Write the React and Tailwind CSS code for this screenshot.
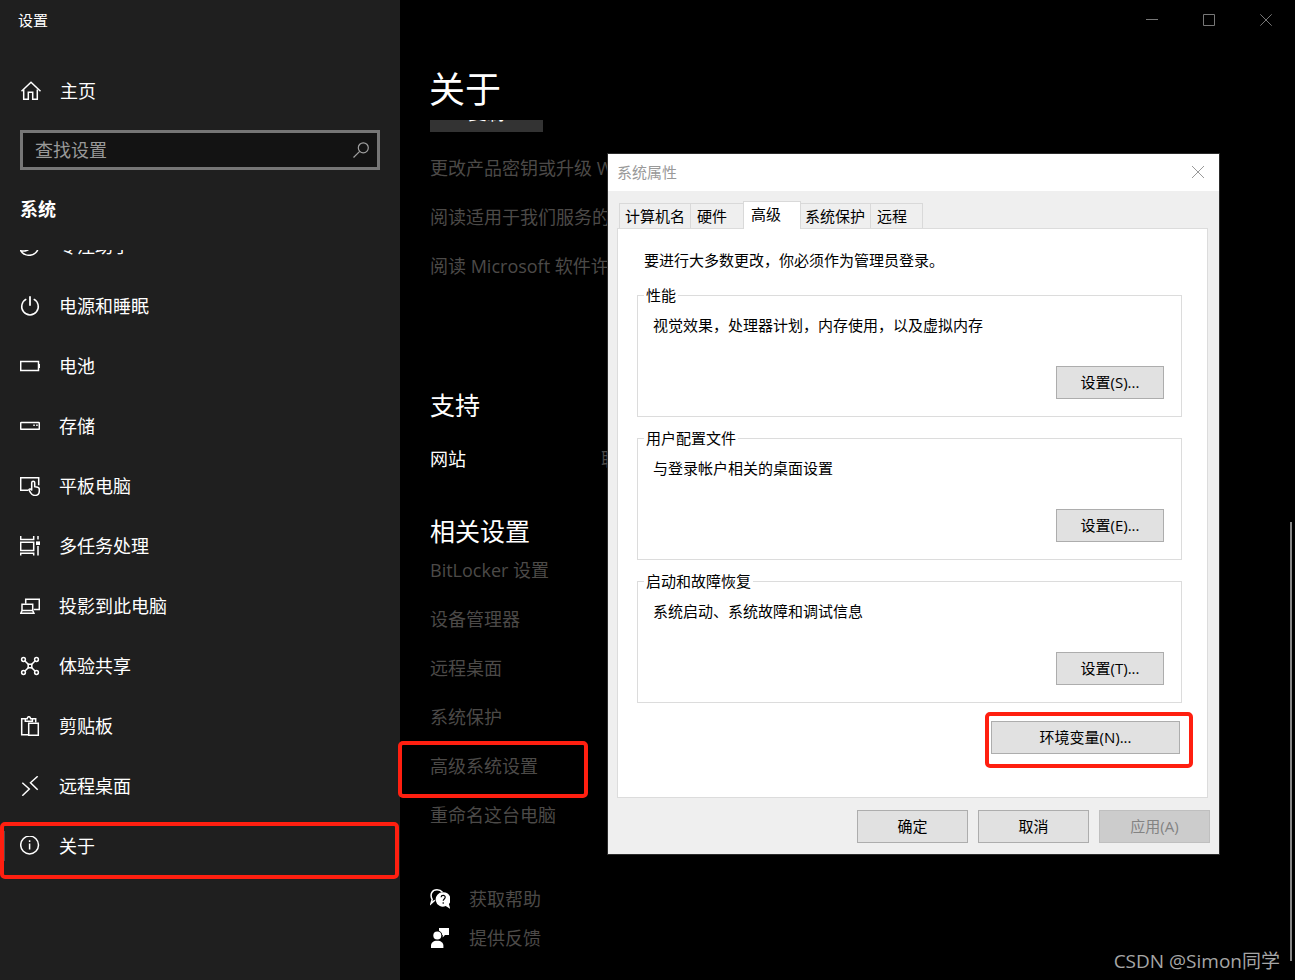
import { clsx } from 'clsx';

const stroke = { fill: 'none', stroke: 'currentColor', strokeWidth: 1.5 };

const icons = {
  home: (
    <g {...stroke}>
      <path d="M1.5 11.3 11 2.2l9.5 9.1" />
      <path d="M3.7 9.5v9.8h4.6v-7h4.4v7h4.6V9.5" />
    </g>
  ),
  focus: (
    <path {...stroke} d="M.8 14.8c2 .4 4.3.3 6.4-.6C12 12 14 7 11.8 1.2c4.6 1.6 7 5.6 6.6 10C17.8 16 14 19.3 9.4 19.3c-3.6 0-6.8-1.7-8.6-4.5z" />
  ),
  power: (
    <g {...stroke}>
      <path d="M6.3 3.2a8.3 8.3 0 1 0 7.4 0" />
      <path d="M10 .3v9.4" strokeWidth="1.8" />
    </g>
  ),
  battery: (
    <g {...stroke}>
      <path d="M.7 5.6h17.8v8.8H.7z" />
      <path d="M19.3 8v4" />
    </g>
  ),
  storage: (
    <g {...stroke}>
      <rect x=".7" y="6.5" width="18.6" height="6.8" rx=".6" />
      <path d="M13.3 9.3h1.5M16.2 9.3h1.5" />
    </g>
  ),
  tablet: (
    <g {...stroke}>
      <path d="M8.3 14.3H.7V1.7h18v7.6" />
      <path d="M11.7 14.5V6.7a1.5 1.5 0 0 1 3 0v4l3 .6c1 .2 1.6.9 1.6 1.9V15c0 2.6-1.8 4.4-4.3 4.4-2 0-3.3-.8-4.2-2.4l-2-3.2c.7-1.1 2-1 2.9.7z" />
    </g>
  ),
  multitask: (
    <g {...stroke}>
      <path d="M.7 0v3.4h13V0" />
      <path d="M.7 6.3h13v8.2H.7z" />
      <path d="M.7 19.5v-2.2h13v2.2" />
      <path d="M18 0v3.5M18 10v9.5" />
      <path d="M16 5.4h4V9h-4z" fill="currentColor" stroke="none" />
    </g>
  ),
  project: (
    <g {...stroke}>
      <path d="M5.7 7.7V3.2h13.6v10.2h-5.5" />
      <path d="M2 14V8.2h10.7V14" />
      <path d="M2 14.6h10.7l1.2 2.7H.8z" />
    </g>
  ),
  share: (
    <g {...stroke}>
      <circle cx="3.5" cy="3.5" r="1.9" />
      <circle cx="16.5" cy="3.5" r="1.9" />
      <circle cx="3.5" cy="16.5" r="1.9" />
      <circle cx="16.5" cy="16.5" r="1.9" />
      <path d="M8.2 8.2h3.6v3.6H8.2z" />
      <path d="m5 5 3.5 3.5M15 5l-3.5 3.5M5 15l3.5-3.5M15 15l-3.5-3.5" />
    </g>
  ),
  clipboard: (
    <g {...stroke}>
      <path d="M8 18.7H1.7V2.7h3.6M12.3 2.7h3.4v3.8" />
      <path d="M5.3 5.3V2.7h1.9c.2-1.2.8-2 1.7-2s1.5.8 1.7 2h1.8v2.6z" />
      <path d="M8.7 7.2h9.6v12.1H8.7z" />
    </g>
  ),
  remote: (
    <g {...stroke}>
      <path d="m2.3 6.8 7 6.2-7 6.7" />
      <path d="m17.7.3-7.2 6.5 7.2 7" />
    </g>
  ),
  about: (
    <g {...stroke}>
      <circle cx="9.6" cy="9" r="8.9" />
      <path d="M9.6 7.5v6M9.6 4.3v1.7" />
    </g>
  ),
  help: (
    <g>
      <path {...stroke} d="M4.8 11.3 1 14.6l1.2-4.2C-.6 5.200 2.300.8 7 .8c2.500 0 4.300 1 5.400 2.400" />
      <path fill="currentColor" d="M13.200 3.300a7.200 7.200 0 1 0 2.500 13.800l4.500 2.700-1.300-4.700A7.200 7.200 0 0 0 13.200 3.300z" />
      <path d="M11.100 8.300c.1-2.600 4.200-2.500 4.100 0 0 1.600-2 1.700-2 3.500M13.200 13.200v1.500" fill="none" stroke="#000" strokeWidth="1.2" />
    </g>
  ),
  feedback: (
    <g fill="currentColor">
      <path d="M9 0h10v7h-4l-2.3 2.4V7H9z" />
      <circle cx="7.3" cy="7.5" r="5" fill="#000" />
      <circle cx="7.3" cy="7.5" r="4" />
      <path d="M1 20v-2.2c0-3 2.3-5 6.2-5s6.2 2 6.2 5V20z" />
    </g>
  ),
};

const navItems = [
  { icon: 'focus', label: '专注助手' },
  { icon: 'power', label: '电源和睡眠' },
  { icon: 'battery', label: '电池' },
  { icon: 'storage', label: '存储' },
  { icon: 'tablet', label: '平板电脑' },
  { icon: 'multitask', label: '多任务处理' },
  { icon: 'project', label: '投影到此电脑' },
  { icon: 'share', label: '体验共享' },
  { icon: 'clipboard', label: '剪贴板' },
  { icon: 'remote', label: '远程桌面' },
  { icon: 'about', label: '关于', active: true },
];

const specLinks = [
  '更改产品密钥或升级 Windows',
  '阅读适用于我们服务的 Microsoft 服务协议',
  '阅读 Microsoft 软件许可条款',
];

const relatedLinks = ['BitLocker 设置', '设备管理器', '远程桌面', '系统保护', '高级系统设置', '重命名这台电脑'];

const tabs = [
  { label: '计算机名', style: 'h-[25px] w-[71px] border-l border-t px-[5px]' },
  { label: '硬件', style: 'h-[25px] w-[53px] border-l border-t px-[6px]' },
  { label: '高级', style: 'h-[28px] -mb-px w-[58px] border-x border-t px-[7px] pb-1 bg-white', active: true },
  { label: '系统保护', style: 'h-[25px] w-[69px] border-t px-1' },
  { label: '远程', style: 'h-[25px] w-[53px] border-x border-t px-[6px]' },
];

const groups = [
  { title: '性能', text: '视觉效果，处理器计划，内存使用，以及虚拟内存', button: '设置(S)...' },
  { title: '用户配置文件', text: '与登录帐户相关的桌面设置', button: '设置(E)...' },
  { title: '启动和故障恢复', text: '系统启动、系统故障和调试信息', button: '设置(T)...' },
];

function Icon({ name, size = 20 }) {
  return (
    <svg width={size} height={size} viewBox={`0 0 ${size} ${size}`} className="shrink-0" aria-hidden="true">
      {icons[name]}
    </svg>
  );
}

// Red frame drawn over the thing the reader has to click
function Marker({ className }) {
  return <span className={clsx('pointer-events-none absolute rounded-[5px] border-4 border-[#ff1f10]', className)} />;
}

function DialogButton({ className, ...props }) {
  return (
    <button
      type="button"
      className={clsx(
        'h-[33px] border border-[#adadad] bg-[#e1e1e1] pb-[2px] text-center disabled:border-[#bfbfbf] disabled:bg-[#cccccc] disabled:text-[#838383]',
        className
      )}
      {...props}
    />
  );
}

function Sidebar() {
  return (
    <aside className="flex w-[400px] shrink-0 flex-col bg-[#1f1f1f] text-lg text-white">
      <div className="flex h-10 items-center px-[18px] pt-[2px] text-[15px]">设置</div>
      <a href="#home" className="mt-5 flex h-[62px] items-center gap-[18px] px-5">
        <Icon name="home" size={22} />
        主页
      </a>
      <div className="mx-5 mt-2 flex h-10 items-center border-3 border-[#767676] bg-[#131313] pl-3 pr-2">
        <input
          type="text"
          aria-label="查找设置"
          placeholder="查找设置"
          className="min-w-0 flex-1 bg-transparent outline-none placeholder:text-[#999999]"
        />
        <svg width="16" height="16" viewBox="0 0 16 16" fill="none" stroke="#a0a0a0" strokeWidth="1.2" aria-hidden="true">
          <circle cx="10.3" cy="5.8" r="5" />
          <path d="M6.7 9.4.5 15.5" />
        </svg>
      </div>
      <h2 className="flex h-20 items-center px-5 pb-[2px] font-bold">系统</h2>
      <nav className="overflow-hidden">
        <ul className="-mt-[34px]">
          {navItems.map((item) => (
            <li key={item.label} className="relative">
              <a href={`#${item.icon}`} className="flex h-[60px] items-center gap-[19px] px-5">
                {item.active && <span className="absolute left-[2px] h-[30px] w-[3px] bg-[#4c4c4c]" />}
                <Icon name={item.icon} />
                {item.label}
              </a>
              {item.active && <Marker className="left-0 right-px top-[6px] h-[57px]" />}
            </li>
          ))}
        </ul>
        <div className="h-5" />
      </nav>
    </aside>
  );
}

function WindowControls() {
  const button = 'flex h-10 w-[57px] items-center justify-center';
  const svg = { width: 12, height: 12, viewBox: '0 0 12 12', fill: 'none', stroke: 'currentColor' };
  return (
    <div className="flex justify-end pr-px text-[#777777]">
      <button type="button" aria-label="最小化" className={button}>
        <svg {...svg}><path d="M0 5.5h12" /></svg>
      </button>
      <button type="button" aria-label="最大化" className={button}>
        <svg {...svg}><path d="M.5.5h11v11H.5z" /></svg>
      </button>
      <button type="button" aria-label="关闭" className={button}>
        <svg {...svg}><path d="m.3.3 11.4 11.4M11.7.3.3 11.7" /></svg>
      </button>
    </div>
  );
}

function AboutPage() {
  return (
    <main className="flex min-w-0 flex-1 flex-col bg-black text-lg text-[#4c4a48]">
      <WindowControls />
      <h1 className="flex h-20 items-center px-[29px] pt-5 text-4xl text-white">关于</h1>
      <div className="overflow-hidden px-[30px]">
        <button type="button" className="-mt-6 flex h-9 w-[113px] items-center justify-center bg-[#333333] pb-[2px] text-white">
          复制
        </button>
        <ul className="mt-[11px]">
          {specLinks.map((label) => (
            <li key={label} className="flex h-[49px] items-center">
              <a href="#spec" className="whitespace-nowrap">{label}</a>
            </li>
          ))}
        </ul>
      </div>

      <div className="px-[30px]">
        <h2 className="mt-[101px] flex h-7 items-center text-[25px] text-white">支持</h2>
        <dl className="mt-4 flex h-12 items-center">
          <dt className="w-[171px] text-white">网站</dt>
          <dd><a href="#support">联机支持</a></dd>
        </dl>

        <h2 className="mt-[34px] flex h-7 items-center text-[25px] text-white">相关设置</h2>
        <ul>
          {relatedLinks.map((label) => (
            <li key={label} className="relative flex h-[49px] items-center">
              <a href="#related">{label}</a>
              {label === '高级系统设置' && <Marker className="-left-8 top-0 h-[57px] w-[190px]" />}
            </li>
          ))}
        </ul>
      </div>
      <div className="mt-10 px-[30px]">
        <a href="#help" className="flex h-[39px] items-center gap-[19px]">
          <span className="text-white"><Icon name="help" /></span>
          获取帮助
        </a>
        <a href="#feedback" className="flex h-[39px] items-center gap-[19px]">
          <span className="text-white"><Icon name="feedback" /></span>
          提供反馈
        </a>
      </div>
    </main>
  );
}

function SystemProperties() {
  return (
    <div
      role="dialog"
      aria-label="系统属性"
      className="absolute left-[608px] top-[154px] w-[611px] bg-[#efefef] pb-[11px] text-[15px] leading-5 text-black outline outline-[#2b2b2b]"
    >
      <div className="flex h-[37px] items-center justify-between bg-white pb-[2px] pl-[9px] pr-[14px] text-[#999999]">
        系统属性
        <button type="button" aria-label="关闭">
          <svg width="14" height="14" viewBox="0 0 14 14" fill="none" stroke="currentColor">
            <path d="m1 1 12 12M13 1 1 13" />
          </svg>
        </button>
      </div>

      <div role="tablist" className="ml-[11px] mt-[10px] flex items-end">
        {tabs.map((tab) => (
          <button
            key={tab.label}
            type="button"
            role="tab"
            aria-selected={Boolean(tab.active)}
            className={clsx('whitespace-nowrap border-[#d9d9d9] text-left', tab.style)}
          >
            {tab.label}
          </button>
        ))}
      </div>

      <div role="tabpanel" className="ml-[9px] mr-[11px] flex flex-col border border-[#dcdcdc] bg-white pb-[43px] pl-[19px] pr-[25px]">
        <p className="mt-[21px] pl-[7px]">要进行大多数更改，你必须作为管理员登录。</p>
        <div className="mt-[15px] flex flex-col gap-[11px]">
          {groups.map((group) => (
            <fieldset key={group.title} className="border border-[#dcdcdc] pl-[6px]">
              <legend className="px-[2px]">{group.title}</legend>
              <div className="flex h-[111px] flex-col justify-between pb-[17px] pl-[9px] pr-[17px] pt-[10px]">
                <p>{group.text}</p>
                <DialogButton className="w-[108px] self-end">{group.button}</DialogButton>
              </div>
            </fieldset>
          ))}
        </div>
        <div className="relative mr-[2px] mt-[18px] flex self-end">
          <DialogButton className="w-[189px]">环境变量(N)...</DialogButton>
          <Marker className="-bottom-[14px] -left-[6px] -right-[13px] -top-[9px]" />
        </div>
      </div>

      <div className="mr-[9px] mt-3 flex justify-end gap-[10px]">
        <DialogButton className="w-[111px]">确定</DialogButton>
        <DialogButton className="w-[111px]">取消</DialogButton>
        <DialogButton className="w-[111px]" disabled>应用(A)</DialogButton>
      </div>
    </div>
  );
}

export default function App() {
  return (
    <div className="relative flex min-h-screen overflow-hidden bg-black font-['Open_Sans','Noto_Sans_CJK_SC',sans-serif]">
      <Sidebar />
      <AboutPage />
      <div className="absolute bottom-[19px] right-[3px] top-[522px] w-[2px] bg-[#868686]" />
      <SystemProperties />
      <p className="absolute bottom-[5px] right-[15px] text-[19px] text-[#a6a6a6]">CSDN @Simon同学</p>
    </div>
  );
}
